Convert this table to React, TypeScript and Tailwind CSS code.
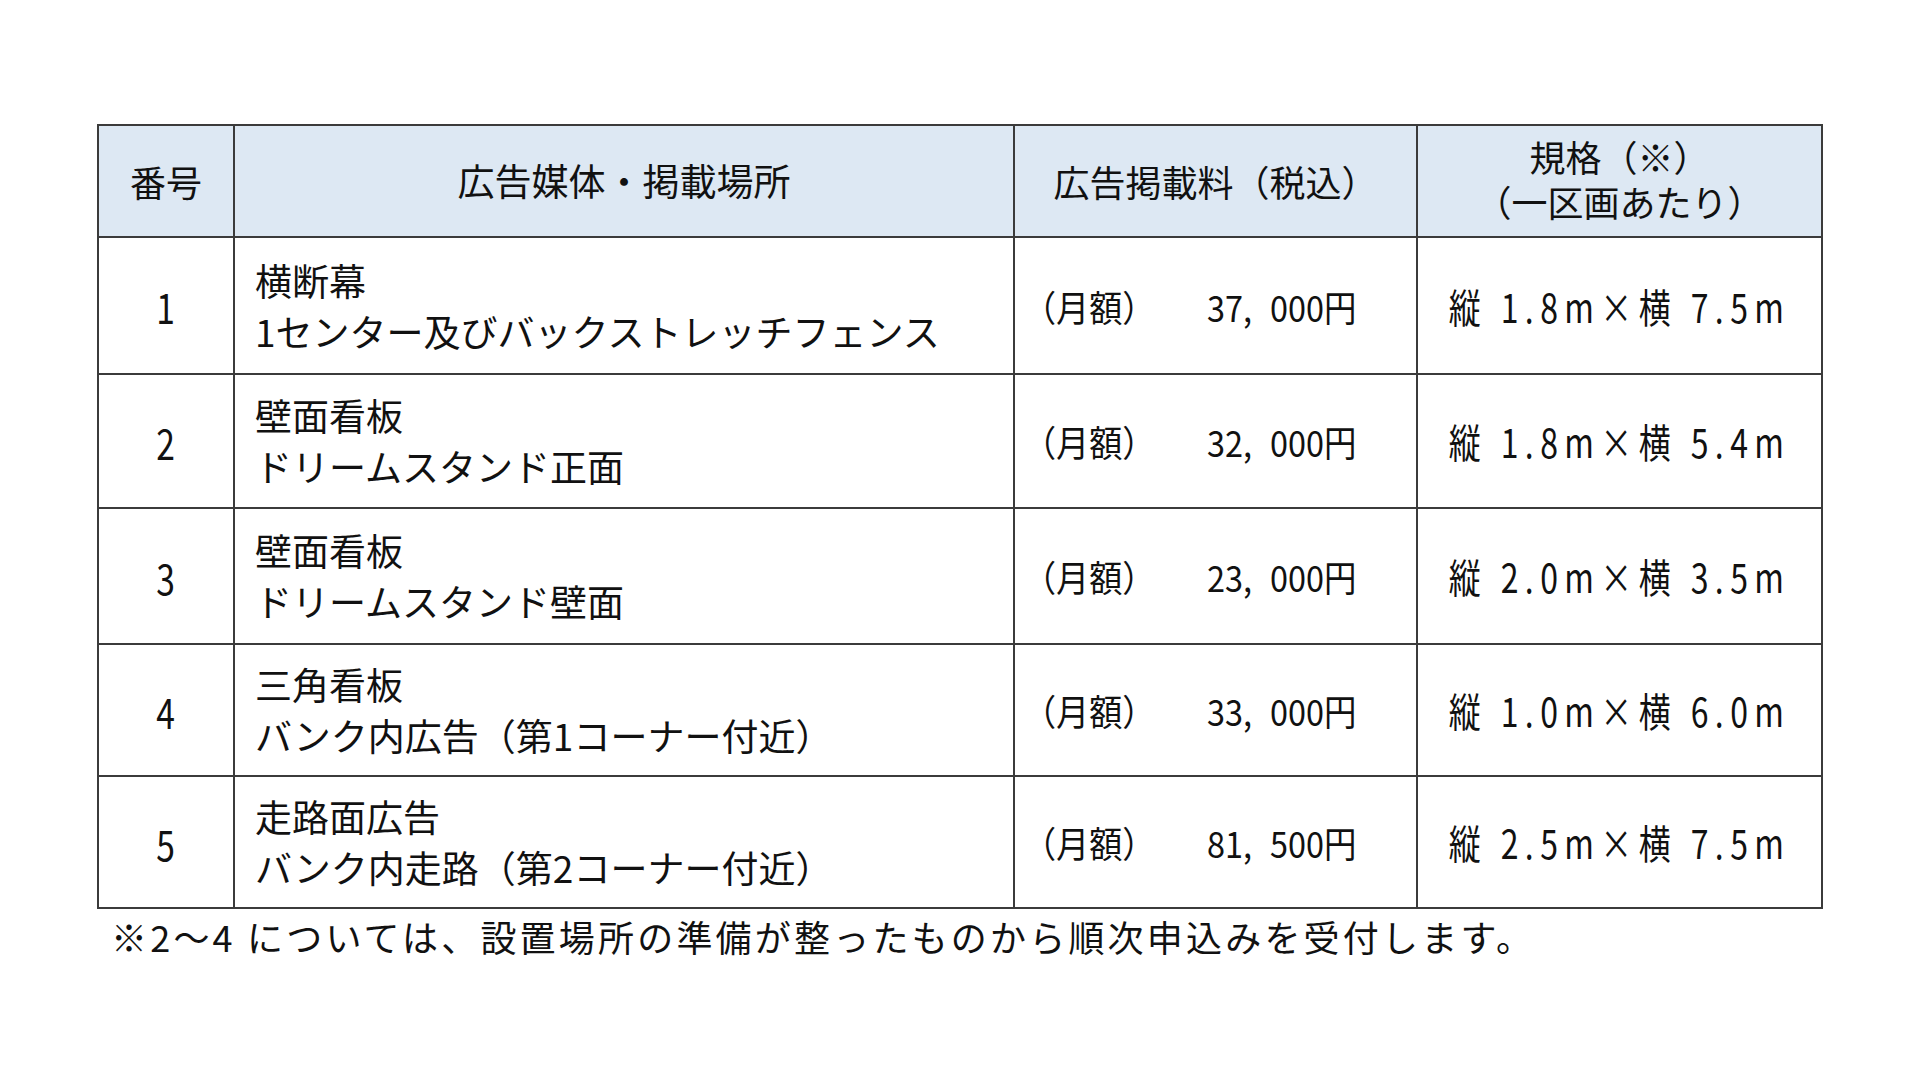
const rows = [
  {
    no: "1",
    kind: "横断幕",
    place: "1センター及びバックストレッチフェンス",
    yen: ["37", "000円"],
    size: "縦 1.8m×横 7.5m",
    h: "h-[137px]",
  },
  {
    no: "2",
    kind: "壁面看板",
    place: "ドリームスタンド正面",
    yen: ["32", "000円"],
    size: "縦 1.8m×横 5.4m",
    h: "h-[134px]",
  },
  {
    no: "3",
    kind: "壁面看板",
    place: "ドリームスタンド壁面",
    yen: ["23", "000円"],
    size: "縦 2.0m×横 3.5m",
    h: "h-[136px]",
  },
  {
    no: "4",
    kind: "三角看板",
    place: "バンク内広告（第1コーナー付近）",
    yen: ["33", "000円"],
    size: "縦 1.0m×横 6.0m",
    h: "h-[132px]",
  },
  {
    no: "5",
    kind: "走路面広告",
    place: "バンク内走路（第2コーナー付近）",
    yen: ["81", "500円"],
    size: "縦 2.5m×横 7.5m",
    h: "h-[132px]",
  },
];

const line = "border-r-2 border-b-2 border-[#3b3b3b]";

function App() {
  return (
    <div className="min-h-screen w-full bg-white pt-[124px] pl-[97px] text-[#111] font-['Noto_Sans_CJK_JP','Noto_Sans',sans-serif]">
      <div className="w-[1726px] border-l-2 border-t-2 border-[#3b3b3b]">
        <div className="grid grid-cols-[136px_780px_403px_405px]">
          {/* header */}
          <div className={`${line} h-[112px] bg-[#dde8f3] flex items-center justify-center text-[36px]`}>
            番号
          </div>
          <div className={`${line} h-[112px] bg-[#dde8f3] flex items-center justify-center text-[37px]`}>
            広告媒体・掲載場所
          </div>
          <div className={`${line} h-[112px] bg-[#dde8f3] flex items-center justify-center text-[36px]`}>
            広告掲載料（税込）
          </div>
          <div className={`${line} h-[112px] bg-[#dde8f3] flex flex-col items-center justify-center pb-[4px] text-[36px] leading-[45px]`}>
            <span>規格（※）</span>
            <span>（一区画あたり）</span>
          </div>

          {rows.map((r) => (
            <div key={r.no} className="contents">
              <div className={`${line} ${r.h} flex items-center justify-center`}>
                <span className="inline-block text-[42px] scale-x-[0.8]">{r.no}</span>
              </div>
              <div className={`${line} ${r.h} flex items-center pl-[20px]`}>
                <div className="whitespace-nowrap text-[37px] leading-[51px]">
                  <div>{r.kind}</div>
                  <div>{r.place}</div>
                </div>
              </div>
              <div className={`${line} ${r.h} flex items-center pl-[8px] text-[36px] whitespace-nowrap`}>
                <span className="w-[184px] shrink-0">
                  <span className="inline-block origin-left scale-x-[0.92]">（月額）</span>
                </span>
                <span className="inline-block origin-left scale-x-[0.9]">
                  {r.yen[0]}
                  <span className="mr-[20px]">,</span>
                  {r.yen[1]}
                </span>
              </div>
              <div className={`${line} ${r.h} flex items-center justify-center`}>
                <span className="inline-block whitespace-nowrap text-[40px] tracking-[8px] scale-x-[0.8]">
                  {r.size}
                </span>
              </div>
            </div>
          ))}
        </div>
      </div>
      <p className="mt-[7px] pl-[14px] text-[36px] leading-[40px] tracking-[3.2px] whitespace-nowrap">
        ※2～4 については、設置場所の準備が整ったものから順次申込みを受付します。
      </p>
    </div>
  );
}

export default App;
